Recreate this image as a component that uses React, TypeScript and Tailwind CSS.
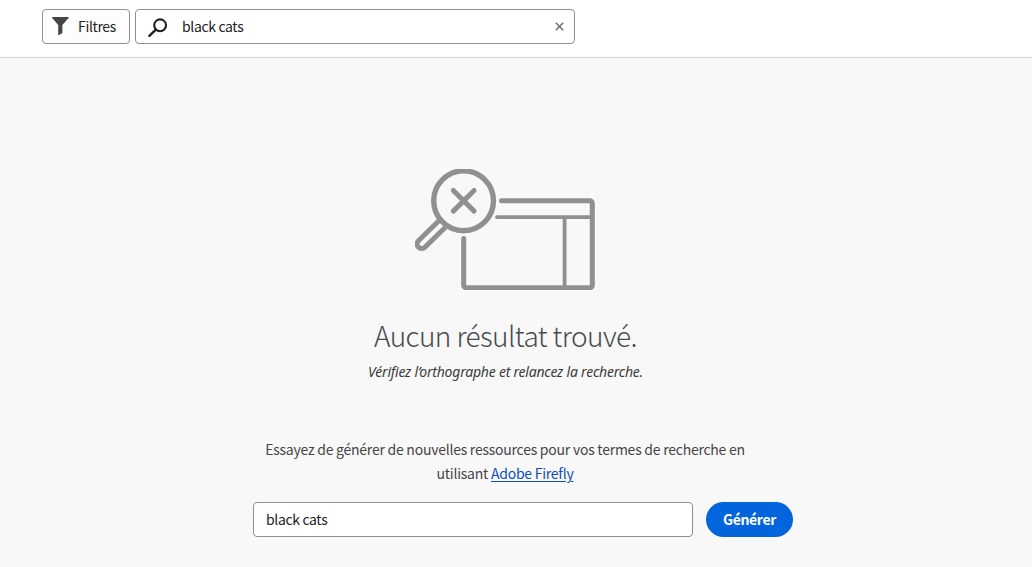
function FilterIcon() {
  return (
    <svg className="h-[19px] w-[17px] shrink-0" viewBox="0 0 17 19" fill="#464646">
      <path d="M.6 0h15.6c.5 0 .7.6.4.9L10.4 8v8L6.8 18.2c-.3.2-.6 0-.6-.4V8L.2.9C-.1.6.1 0 .6 0Z" />
    </svg>
  );
}

function SearchIcon() {
  return (
    <svg className="mt-[2px] h-[19px] w-[19px] shrink-0" viewBox="0 0 19 19" fill="none" stroke="#222" strokeWidth="2.1">
      <circle cx="12.1" cy="7.3" r="5.9" />
      <path d="M7.8 11.6 1.4 17.8" strokeWidth="2.4" strokeLinecap="round" />
    </svg>
  );
}

function NoResultIcon() {
  return (
    <svg
      className="h-[121px] w-[180px]"
      viewBox="0 0 180 121"
      fill="none"
      stroke="#909090"
      strokeWidth="5"
      strokeLinecap="round"
      strokeLinejoin="round"
    >
      <circle cx="48.6" cy="31.8" r="29.9" strokeWidth="5.4" />
      <path d="m38.3 21.5 20.8 20.6M59.1 21.5 38.3 42.1" />
      <path d="M23.6 52 3.5 71.8a4.5 4.5 0 0 0 6.4 6.4L30.4 58.2" strokeLinecap="butt" />
      <path d="M86.5 31.8h88.2a2.6 2.6 0 0 1 2.6 2.6v81.8a2.6 2.6 0 0 1-2.6 2.6H51.3a2.6 2.6 0 0 1-2.6-2.6V69.5" />
      <path d="M82 48.2h95M149.6 48.2v70" strokeWidth="3.8" />
    </svg>
  );
}

export default function App() {
  return (
    <div className="flex h-[567px] w-[1032px] flex-col overflow-hidden bg-[#f8f8f8] font-['Noto_Sans_CJK_SC','Open_Sans',sans-serif] text-[14px] tracking-[-0.35px] text-[#222]">
      <header className="flex h-[58px] shrink-0 items-start gap-[5px] border-b border-[#d3d3d3] bg-white pt-[9px] pl-[42px]">
        <button className="flex h-[35px] w-[88px] items-center gap-[9px] rounded-[4px] border border-[#909090] bg-[#fdfdfd] pl-[9px]">
          <FilterIcon />
          <span>Filtres</span>
        </button>
        <div className="flex h-[35px] w-[440px] items-center rounded-[4px] border border-[#909090] bg-white pr-[10px] pl-[12px]">
          <SearchIcon />
          <span className="ml-[15px] flex-1">black cats</span>
          <svg className="h-[9px] w-[9px]" viewBox="0 0 9 9" stroke="#6e6e6e" strokeWidth="1.5">
            <path d="m.8.8 7.4 7.4M8.2.8.8 8.2" />
          </svg>
        </div>
      </header>
      <main className="flex w-[1010px] flex-col items-center pt-[111px]">
        <NoResultIcon />
        <h1 className="mt-[25px] pl-[1px] text-[28px] leading-[40px] font-light tracking-[-0.6px] whitespace-nowrap text-[#4b4b4b]">
          Aucun résultat trouvé.
        </h1>
        <p className="mt-[6px] pl-[1px] font-['Noto_Sans',sans-serif] text-[14px] leading-[22px] tracking-[-0.22px] whitespace-nowrap text-[#3b3b3b] italic">
          Vérifiez l’orthographe et relancez la recherche.
        </p>
        <p className="mt-[54px] text-center leading-[24px] tracking-[-0.24px] whitespace-nowrap text-[#464646]">
          <span>Essayez de générer de nouvelles ressources pour vos termes de recherche en</span>
          <br />
          utilisant{" "}
          <a className="text-[#0d4fb8] underline underline-offset-2">Adobe Firefly</a>
        </p>
        <div className="mt-[17px] ml-[36px] flex gap-[13px]">
          <div className="flex h-[35px] w-[440px] items-center rounded-[4px] border border-[#909090] bg-white pl-[12px]">
            <span>black cats</span>
          </div>
          <button className="h-[35px] w-[87px] rounded-full bg-[#0265dc] font-bold text-white">Générer</button>
        </div>
      </main>
    </div>
  );
}
